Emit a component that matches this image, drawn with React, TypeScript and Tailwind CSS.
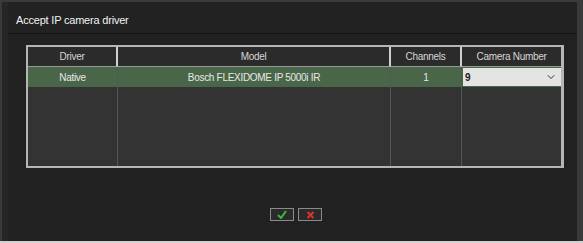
import { ChevronDown } from 'lucide-react';

const cols = [
  { label: 'Driver', w: 'w-[90px]' },
  { label: 'Model', w: 'w-[273px]' },
  { label: 'Channels', w: 'w-[71px]' },
  { label: 'Camera Number', w: 'flex-1' },
];

export default function App() {
  return (
    <div className="w-[583px] h-[243px] bg-[#3a3a3a] font-['Liberation_Sans',Arial,sans-serif] text-[10px] tracking-[-0.3px] text-[#e0e0e0] flex flex-col">
      <div className="flex-1 flex mt-[2px] mr-[6px] ml-[2px] border-l-[6px] border-[#262626] bg-[#212121]">
        <div className="flex-1 flex flex-col">
          {/* Title */}
          <div className="h-[32px] flex items-center pt-[5px] pl-[8px] text-[11px] tracking-[-0.2px] text-[#f2f2f2] border-b border-[#151515] bg-[#222]">
            Accept IP camera driver
          </div>

          {/* Table */}
          <div className="mt-[11px] ml-[18px] mr-[13px] h-[123px] border-2 border-[#b5b5b5] border-r-[3px] bg-[#333] flex">
            {cols.map((c, i) => (
              <div
                key={c.label}
                className={`${c.w} flex flex-col ${i < cols.length - 1 ? 'border-r border-[#4e5a52]' : ''}`}
              >
                <div
                  className={`h-[20px] flex items-center justify-center bg-[#2b2b2b] text-[#d6d6d6] border-b border-[#9a9a9a] ${
                    i < cols.length - 1 ? 'border-r-2 border-r-[#cfcfcf] -mr-px' : ''
                  }`}
                >
                  {c.label}
                </div>
                {i === 3 ? (
                  <div className="h-[20px] bg-[#4a6649] flex items-center pl-px">
                    <div className="h-[18px] w-full bg-[#e4e4e4] flex items-center justify-between pl-[2px] pr-[4px] text-[#1a1a1a] font-bold">
                      <span>9</span>
                      <ChevronDown className="w-[12px] h-[12px] text-[#333]" strokeWidth={2} />
                    </div>
                  </div>
                ) : (
                  <div className="h-[20px] bg-[#4a6649] flex items-center justify-center text-[#e8e8e8]">
                    {i === 0 ? 'Native' : i === 1 ? 'Bosch FLEXIDOME IP 5000i IR' : '1'}
                  </div>
                )}
                <div className="flex-1" />
              </div>
            ))}
          </div>

          {/* Buttons */}
          <div className="flex justify-center gap-[4px] mt-[40px] ml-[7px]">
            <button className="w-[24px] h-[13px] border border-[#8a8a8a] bg-[#2a2a2a] flex items-center justify-center">
              <svg width="10" height="9" viewBox="0 0 10 9">
                <path d="M1 5 L4 8 L9 1" fill="none" stroke="#3cb83c" strokeWidth="2" />
              </svg>
            </button>
            <button className="w-[24px] h-[13px] border border-[#8a8a8a] bg-[#2a2a2a] flex items-center justify-center">
              <svg width="9" height="8" viewBox="0 0 9 8">
                <path d="M1.5 1 L7.5 7 M7.5 1 L1.5 7" fill="none" stroke="#e03030" strokeWidth="2" />
              </svg>
            </button>
          </div>
        </div>
      </div>
      <div className="h-[2px] bg-[#d0d0d0]" />
    </div>
  );
}
